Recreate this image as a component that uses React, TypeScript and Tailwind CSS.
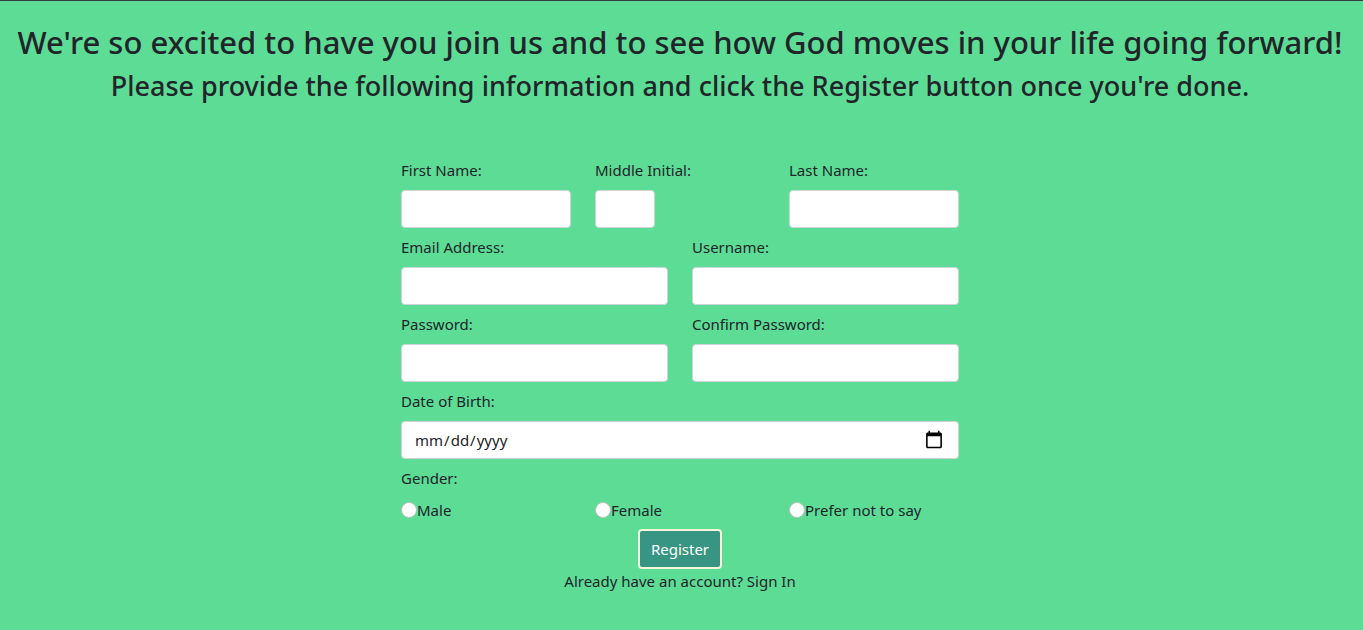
import { useState } from "react";
import type { FormEvent, InputHTMLAttributes } from "react";

type FieldProps = InputHTMLAttributes<HTMLInputElement> & {
  id: string;
  label: string;
  width?: string;
};

const inputStyle =
  "block h-[38px] rounded-sm border border-[#ced4da] bg-white px-3 text-[15px] text-[#212529] focus:outline-2 focus:outline-[#389583] [&::-webkit-calendar-picker-indicator]:mr-0.5 [&::-webkit-calendar-picker-indicator]:size-5 [&::-webkit-calendar-picker-indicator]:p-0";

function Field({ id, label, width = "w-full", ...rest }: FieldProps) {
  return (
    <div>
      <label htmlFor={id} className="block h-[39px] py-[7px] leading-6 whitespace-nowrap">
        {label}
      </label>
      <input id={id} name={id} className={`${inputStyle} ${width}`} {...rest} />
    </div>
  );
}

const genders = ["Male", "Female", "Prefer not to say"];

export default function App() {
  const [gender, setGender] = useState("");
  const submit = (event: FormEvent) => event.preventDefault();

  return (
    <main className="min-h-screen border-t border-[#343a40] bg-[#5ddc96] pr-[19px] pl-4 pt-[22px] pb-9 font-['Noto_Sans','Open_Sans',sans-serif] text-[15px] text-[#212529]">
      <header className="text-center font-medium">
        <h1 className="text-[31px] leading-[38px]">
          We're so excited to have you join us and to see how God moves in your life going forward!
        </h1>
        <h2 className="mt-2 text-[27px] leading-[34px]">
          Please provide the following information and click the Register button once you're done.
        </h2>
      </header>

      <form onSubmit={submit} className="mx-auto mt-12 w-full max-w-[558px]">
        <div className="grid grid-cols-3 gap-x-6">
          <Field id="firstName" label="First Name:" type="text" />
          <Field id="middleInitial" label="Middle Initial:" type="text" maxLength={1} width="w-[60px]" />
          <Field id="lastName" label="Last Name:" type="text" />
        </div>
        <div className="grid grid-cols-2 gap-x-6">
          <Field id="email" label="Email Address:" type="email" />
          <Field id="username" label="Username:" type="text" />
          <Field id="password" label="Password:" type="password" />
          <Field id="confirmPassword" label="Confirm Password:" type="password" />
        </div>
        <Field id="birthDate" label="Date of Birth:" type="date" />

        <fieldset>
          <legend className="block h-[39px] py-[7px] leading-6">Gender:</legend>
          <div className="grid grid-cols-3 gap-x-6">
            {genders.map((name) => (
              <label key={name} className="flex items-center leading-6 whitespace-nowrap">
                <input
                  type="radio"
                  name="gender"
                  value={name}
                  checked={gender === name}
                  onChange={() => setGender(name)}
                  className="size-4 appearance-none rounded-full border border-[#bfbfbf] bg-white checked:border-4 checked:border-[#389583]"
                />
                {name}
              </label>
            ))}
          </div>
        </fieldset>

        <div className="mt-[7px] text-center">
          <button
            type="submit"
            className="h-10 rounded-sm border-2 border-[#f5f5dc] bg-[#389583] px-[11px] text-white"
          >
            Register
          </button>
          <p className="leading-6">
            Already have an account? <a href="#sign-in">Sign In</a>
          </p>
        </div>
      </form>
    </main>
  );
}
